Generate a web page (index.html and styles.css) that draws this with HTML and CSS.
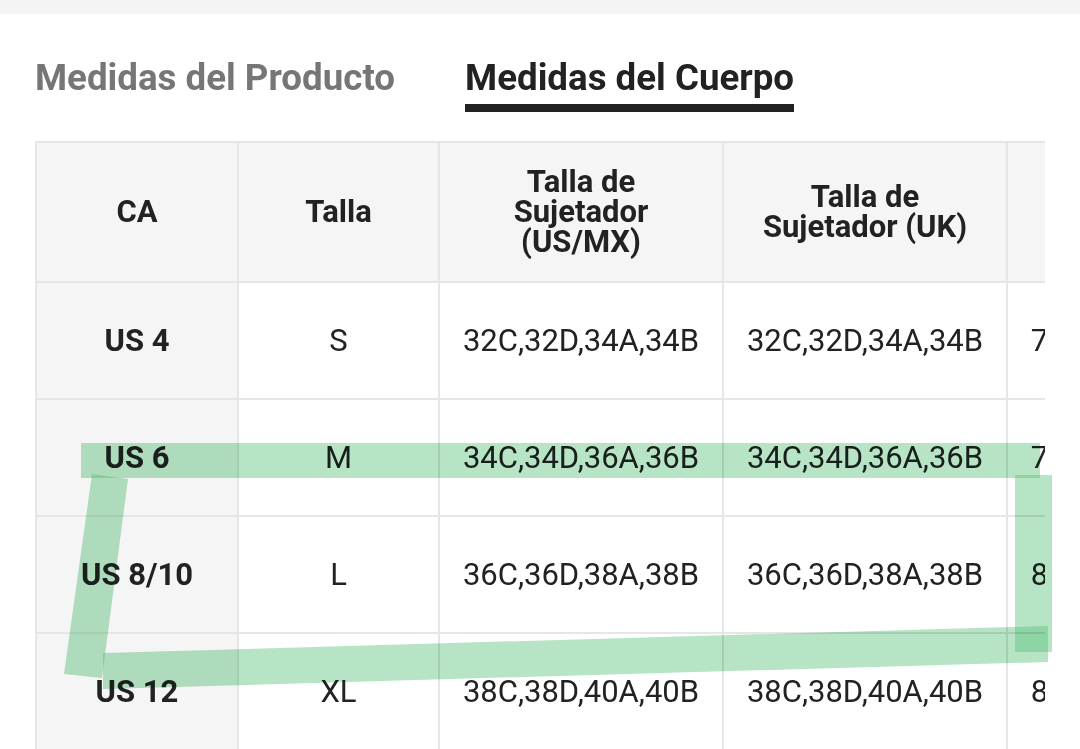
FILE: index.html
```html
<!DOCTYPE html>
<html lang="es">
<head>
<meta charset="utf-8">
<title>Guía de tallas</title>
<link rel="stylesheet" href="styles.css">
</head>
<body>
<div class="topbar"></div>
<div class="tabs">
  <div class="tab">Medidas del Producto</div>
  <div class="tab active">Medidas del Cuerpo</div>
</div>
<div class="table-wrap">
  <table class="size-table">
    <colgroup>
      <col class="c1"><col class="c2"><col class="c3"><col class="c4"><col class="c5"><col class="c6">
    </colgroup>
    <thead>
      <tr>
        <th>CA</th>
        <th>Talla</th>
        <th>Talla de<br>Sujetador<br>(US/MX)</th>
        <th>Talla de<br>Sujetador (UK)</th>
        <th>Busto</th>
        <th>Cintura</th>
      </tr>
    </thead>
    <tbody>
      <tr><th>US 4</th><td>S</td><td>32C,32D,34A,34B</td><td>32C,32D,34A,34B</td><td>76.2-81.3</td><td>61-66</td></tr>
      <tr><th>US 6</th><td>M</td><td>34C,34D,36A,36B</td><td>34C,34D,36A,36B</td><td>79.5-84.5</td><td>66-71</td></tr>
      <tr><th>US 8/10</th><td>L</td><td>36C,36D,38A,38B</td><td>36C,36D,38A,38B</td><td>84.5-89.5</td><td>71-76</td></tr>
      <tr><th>US 12</th><td>XL</td><td>38C,38D,40A,40B</td><td>38C,38D,40A,40B</td><td>89.5-94.5</td><td>76-81</td></tr>
    </tbody>
  </table>
</div>
<svg class="marker" width="1080" height="749" viewBox="0 0 1080 749" aria-hidden="true">
  <g fill="#5ec47e" fill-opacity="0.45">
    <polygon points="81,443 1040,443 1040,478 81,478"/>
    <polygon points="1015,475 1052,475 1052,652 1015,652"/>
    <polygon points="92,474 128,479 102,678 64,674"/>
    <polygon points="103,653 1048,626 1048,662 103,689"/>
  </g>
</svg>
</body>
</html>
```
FILE: styles.css
```css
html, body {
  margin: 0;
  padding: 0;
  background: #ffffff;
  font-family: Roboto, "Liberation Sans", Arial, sans-serif;
  color: #222222;
  width: 1080px;
  height: 749px;
  overflow: hidden;
  position: relative;
}

.topbar {
  height: 14px;
  background: #f4f4f4;
}

.tabs {
  display: flex;
  gap: 70px;
  padding: 42px 0 0 35px;
}

.tab {
  font-size: 36.7px;
  line-height: 44px;
  font-weight: 700;
  color: #767676;
  padding-bottom: 4px;
  border-bottom: 8px solid transparent;
}

.tab.active {
  color: #222222;
  border-bottom-color: #222222;
}

.table-wrap {
  margin: 29px 0 0 35px;
  width: 1010px;
  overflow: hidden;
}

.size-table {
  border-collapse: collapse;
  table-layout: fixed;
  width: 1351px;
}

.c1 { width: 202px; }
.c2 { width: 201px; }
.c3 { width: 284px; }
.c4 { width: 284px; }
.c5 { width: 177px; }
.c6 { width: 203px; }

.size-table th,
.size-table td {
  border: 2px solid #e6e6e6;
  text-align: center;
  vertical-align: middle;
  padding: 0;
  color: #222222;
}

.size-table thead th {
  height: 138px;
  background: #f5f5f5;
  font-size: 31px;
  line-height: 30px;
  font-weight: 700;
}

.size-table tbody th {
  background: #f5f5f5;
  font-weight: 700;
  font-size: 31px;
}

.size-table tbody td {
  font-size: 31px;
  font-weight: 400;
}

.size-table tbody tr {
  height: 117px;
}

.marker {
  position: absolute;
  left: 0;
  top: 0;
  pointer-events: none;
  mix-blend-mode: multiply;
}
```
